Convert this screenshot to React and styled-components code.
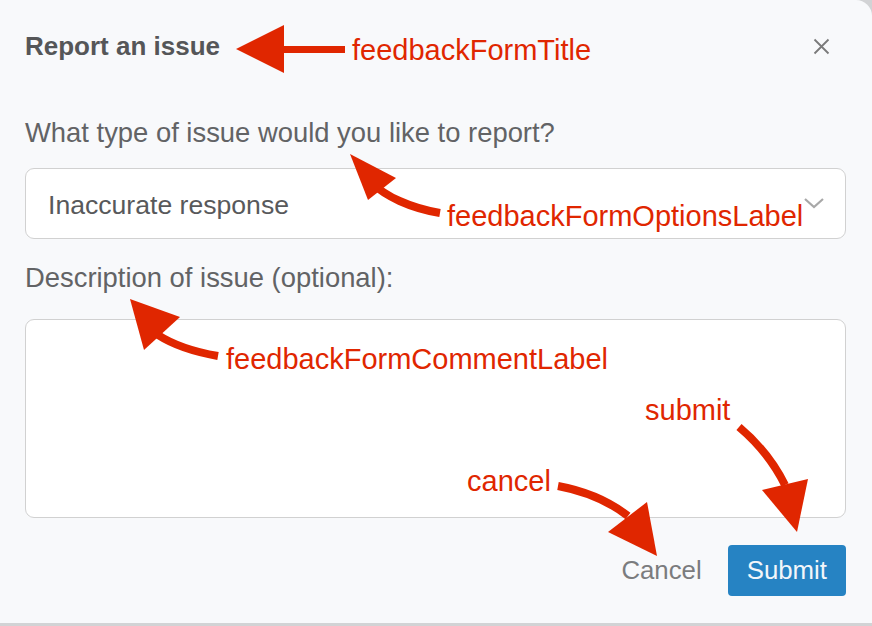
import React from 'react'
import styled, { createGlobalStyle } from 'styled-components'

const GlobalStyle = createGlobalStyle`
    html, body {
        margin: 0;
        padding: 0;
        background: #d2d3d5;
    }
    * {
        box-sizing: border-box;
    }
`

const Page = styled.div`
    position: relative;
    width: 872px;
    height: 626px;
    overflow: hidden;
    background: #d2d3d5;
    font-family: "Liberation Sans", Arial, sans-serif;
`

const Dialog = styled.div`
    height: 623px;
    background: #f8f9fb;
    border-top-right-radius: 16px;
    padding: 28px 26px 0 25px;
    display: flex;
    flex-direction: column;
`

const Header = styled.div`
    display: flex;
    align-items: center;
    justify-content: space-between;
    height: 36px;
`

const Title = styled.h2`
    margin: 0;
    font-size: 26px;
    line-height: 32px;
    font-weight: 700;
    color: #555658;
`

const CloseButton = styled.button`
    border: none;
    background: none;
    padding: 0;
    margin-right: 16px;
    width: 18px;
    height: 18px;
    display: flex;
    align-items: center;
    justify-content: center;
    color: #7a7a7a;
    cursor: pointer;
`

const Label = styled.label`
    display: block;
    margin-top: ${props => props.top}px;
    font-size: 27.4px;
    line-height: 26px;
    color: #626365;
`

const Select = styled.div`
    margin-top: 22px;
    height: 71px;
    background: #fff;
    border: 1.5px solid #d1d1d1;
    border-radius: 9px;
    padding: 3px 20px 0 22px;
    display: flex;
    align-items: center;
    justify-content: space-between;
    font-size: 26.6px;
    color: #58595b;
`

const Chevron = styled.span`
    display: flex;
    margin-top: -4px;
    color: #a8a8a8;
`

const TextArea = styled.div`
    margin-top: 28px;
    height: 199px;
    background: #fff;
    border: 1.5px solid #d1d1d1;
    border-radius: 9px;
`

const Footer = styled.div`
    margin-top: 27px;
    display: flex;
    justify-content: flex-end;
    align-items: center;
    gap: 14px;
`

const Button = styled.button`
    height: 51px;
    font-family: inherit;
    font-size: 25.8px;
    border-radius: 4px;
    cursor: pointer;
    border: none;
    padding: ${props => props.primary ? "0 19px" : "0 12px"};
    background: ${props => props.primary ? "#2683c3" : "transparent"};
    color: ${props => props.primary ? "#f2f6fa" : "#7b7c7e"};
`

const Overlay = styled.svg`
    position: absolute;
    left: 0;
    top: 0;
    pointer-events: none;
`

const Note = styled.span`
    position: absolute;
    left: ${props => props.x}px;
    top: ${props => props.y}px;
    font-size: 29px;
    line-height: 34px;
    color: #e02600;
    white-space: nowrap;
`

const RED = "#e02600"

const Annotations = () => (
    <>
        <Overlay width="872" height="626" viewBox="0 0 872 626">
            {/* title arrow */}
            <path d="M282 46 L345 46 L345 53 L282 53 Z" fill={RED} />
            <path d="M236 49 L284 25 L284 73 Z" fill={RED} />
            {/* options label arrow */}
            <path d="M440 213 C410 208 385 196 372 183" stroke={RED} strokeWidth="8" fill="none" />
            <path d="M350 154 L396 178 L368 200 Z" fill={RED} />
            {/* comment label arrow */}
            <path d="M218 356 C195 352 175 346 158 335" stroke={RED} strokeWidth="8" fill="none" />
            <path d="M130 299 L180 317 L144 350 Z" fill={RED} />
            {/* cancel arrow */}
            <path d="M558 486 C585 491 610 502 628 516" stroke={RED} strokeWidth="8" fill="none" />
            <path d="M657 556 L608 532 L647 502 Z" fill={RED} />
            {/* submit arrow */}
            <path d="M739 427 C758 443 775 465 785 485" stroke={RED} strokeWidth="8" fill="none" />
            <path d="M797 532 L762 490 L808 479 Z" fill={RED} />
        </Overlay>
        <Note x={352} y={33}>feedbackFormTitle</Note>
        <Note x={447} y={199}>feedbackFormOptionsLabel</Note>
        <Note x={226} y={342}>feedbackFormCommentLabel</Note>
        <Note x={645} y={393}>submit</Note>
        <Note x={467} y={464}>cancel</Note>
    </>
)

const App = () => {
    return (
        <Page>
            <GlobalStyle />
            <Dialog>
                <Header>
                    <Title>Report an issue</Title>
                    <CloseButton aria-label="Close">
                        <svg width="17" height="17" viewBox="0 0 17 17">
                            <path d="M1.5 1.5 L15.5 15.5 M15.5 1.5 L1.5 15.5" stroke="currentColor" strokeWidth="1.8" />
                        </svg>
                    </CloseButton>
                </Header>
                <Label top={56}>What type of issue would you like to report?</Label>
                <Select>
                    <span>Inaccurate response</span>
                    <Chevron>
                        <svg width="22" height="14" viewBox="0 0 22 14">
                            <path d="M2 3 L11 11 L20 3" stroke="currentColor" strokeWidth="2.2" fill="none" />
                        </svg>
                    </Chevron>
                </Select>
                <Label top={26}>Description of issue (optional):</Label>
                <TextArea />
                <Footer>
                    <Button>Cancel</Button>
                    <Button primary>Submit</Button>
                </Footer>
            </Dialog>
            <Annotations />
        </Page>
    )
}

export default App
